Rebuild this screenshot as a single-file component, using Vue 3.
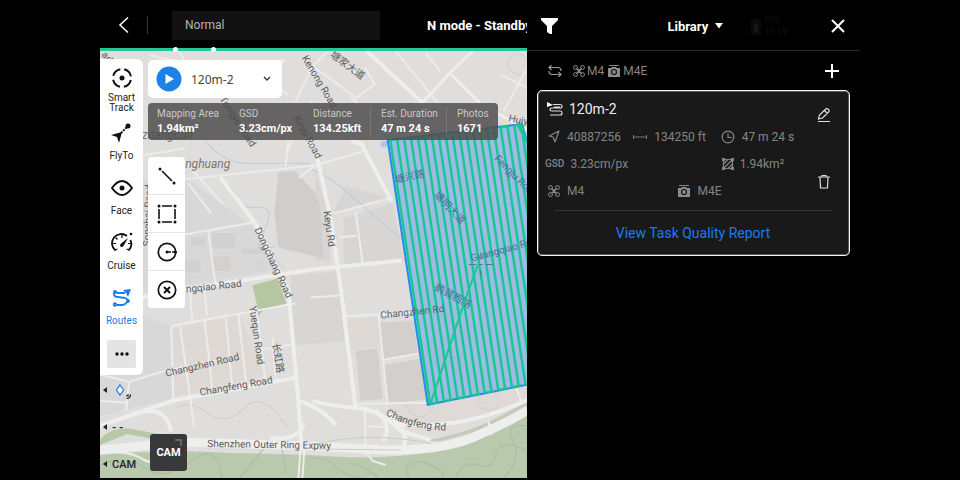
<script setup>
import { ref } from 'vue'

const mode = ref('Normal')
const route = ref('120m-2')
const source = ref('Library')

const stats = [
  { label: 'Mapping Area', value: '1.94km²' },
  { label: 'GSD', value: '3.23cm/px' },
  { label: 'Distance', value: '134.25kft' },
  { label: 'Est. Duration', value: '47 m 24 s' },
  { label: 'Photos', value: '1671' },
]

const labels = [
  { t: 'Kenong Road', x: 301, y: 58, r: 59 },
  { t: '塘家大道', x: 329, y: 56, r: 37, s: 10 },
  { t: 'Tongye Road', x: 219, y: 99, r: 57 },
  { t: 'Keyu Road', x: 293, y: 118, r: 61 },
  { t: 'Keyu Rd', x: 323, y: 211, r: 82 },
  { t: 'Huiyi', x: 507, y: 121, r: 12 },
  { t: 'Dongchang Road', x: 254, y: 229, r: 65 },
  { t: 'ngqiao Road', x: 186, y: 292, r: -6 },
  { t: 'Changzhen Road', x: 166, y: 376, r: -13 },
  { t: 'Changfeng Road', x: 200, y: 395, r: -10 },
  { t: 'Yuequn Road', x: 249, y: 306, r: 82 },
  { t: '长虹路', x: 272, y: 343, r: 81, s: 10 },
  { t: 'Shenzhen Outer Ring Expwy', x: 207, y: 446, r: 1 },
  { t: 'Songbai Road', x: 150, y: 246, r: -88 },
  { t: 'ad', x: 101, y: 55, r: 50 },
]
const zoneLabels = [
  { t: 'Guangqiao Road', x: 471, y: 261, r: -15 },
  { t: 'Fengju Road', x: 493, y: 159, r: 45 },
  { t: '塘兴路', x: 395, y: 183, r: -13, s: 10 },
  { t: '塘明大道', x: 433, y: 195, r: 47, s: 10 },
  { t: '鹅颈西路', x: 433, y: 289, r: 28, s: 10 },
]

const passes = Array.from({ length: 28 }, (_, i) => {
  const x = 390 + i * 7
  return { x1: x - 8, y1: 90, x2: x + 42, y2: 420 }
})
</script>

<template>
  <main class="screen">
    <section class="flight">
      <header class="topbar">
        <button class="plain back" aria-label="Back">
          <svg width="12" height="18" viewBox="0 0 12 18"><path d="M10 1.500 2 9l8 7.500" fill="none" stroke="#fff" stroke-width="1.500" /></svg>
        </button>
        <span class="bar-sep"></span>
        <input v-model="mode" class="mode" aria-label="Status" />
        <h1 class="state">N mode - Standby</h1>
      </header>
      <div class="battery-line"><i></i><i></i></div>

      <div class="map">
        <svg class="map-art" viewBox="100 51 427 426" preserveAspectRatio="xMinYMin slice" aria-label="Map">
          <defs>
            <clipPath id="zone"><path d="M387 140 521 124 560 261 600 369 427 404Z" /></clipPath>
            <path id="curve" d="M385 414Q412 429 450 430" />
          </defs>
          <path d="M100 51H527V477H100Z" fill="#dfdedd" />
          <path d="M143 180 186 178 250 224 285 268 143 292ZM100 300 170 325 172 398 100 415Z" fill="#d8d8d9" />
          <path d="M345 185 385 197 333 212ZM343 218 392 203 404 262 343 268ZM290 275 338 271 344 340 293 345ZM315 170 327 212 330 262 315 260Z" fill="#d7d6d5" />
          <path d="M278 172 295 171 315 193 320 210 323 258 278 247 274 212Z" fill="#d0cecd" />
          <path d="M191 237h14v8h-14ZM212 233h23v15h-23ZM185 259h15v13h-15ZM212 256h18v14h-18ZM242 248h24v5h-24Z" fill="#d3d0ce" />
          <path d="M173 328 240 313 264 375 174 396ZM345 319 378 316 383 346 348 349Z" fill="#ded9d5" />
          <path d="M355 350 377 348 382 398 360 400ZM378 322 413 320 417 353 383 359ZM384 364 420 358 425 399 386 402Z" fill="#d2cfcc" />
          <path d="M386 405 527 386V404Q474 424 400 421Z" fill="#dfdad7" />
          <path d="M252 285 277 278 286 303 258 310ZM254 310l12-4-10 12Z" fill="#b5c6a1" />
          <path d="M100 439Q110 426 132 428L174 436Q196 440 215 438L180 443 127 433 100 444Z" fill="#b7c8a8" />
          <path d="M100 454Q170 448 230 452L310 454Q380 460 430 451 484 439 527 413V477H100Z" fill="#b9c9ae" />
          <path d="M423 440Q480 431 527 399V408Q490 429 440 440Z" fill="#c2cbb7" />

          <g fill="none" stroke="#a9bb9d" stroke-width="1">
            <path d="M100 464Q125 453 145 467T190 461T220 470T254 459T285 472" />
            <path d="M455 477Q462 459 477 464T495 453T527 450M408 477Q402 462 414 461T438 469T430 477M502 477Q522 458 512 440T527 425" />
            <path d="M309 458Q328 455 335 465T363 477M378 477Q365 466 350 462" />
          </g>
          <g fill="none" stroke="#d1cecc" stroke-width="1">
            <path d="M175 408Q188 398 207 412T244 407T287 427M408 409q-8-12 4-18t17 7q8 7-2 15t-19-4ZM477 402q1-11 10-11t11 7q0 12-10 11t-11-7" />
            <path d="M506 65q4-14 15-10t4 17q-10 8-19-7ZM184 275q-8-8 3-15M255 264q3-5 7 0t-3 5Z" />
          </g>
          <g fill="none" stroke="#becbda" stroke-width="1">
            <path d="M205 140Q223 163 247 163T310 163M218 177Q234 188 237 198T258 207T263 232 275 245M310 169Q328 175 350 195L402 240" />
          </g>
          <g fill="none" stroke="#ececeb" stroke-width="2">
            <path d="M143 155 185 148M185 179 315 165 363 151M188 165 222 203M188 183 211 213M333 213 390 198M355 212 362 262M338 237 356 235M310 297 339 295M315 165 298 178M288 140 285 165M312 100 286 153" />
            <path d="M185 234 253 222M208 230 215 283M172 325 295 303M171 326 173 398M180 326 194 426M204 318 213 395M225 313 232 386M238 313 246 384M256 310 265 380M272 337 275 376M255 350 295 343" />
            <path d="M100 374 129 381 165 370 220 359M129 381 126 410M342 316 413 312M378 315 387 404M383 359 417 353M355 403 427 402M364 405 365 446M365 425 383 426M100 400 126 402M190 290 192 323M204 288 207 315" />
            <path d="M283 60 270 82 288 95M295 102 312 66 356 98 374 84 364 67M312 66 327 52M395 51 434 99 468 147M500 75 527 88M503 111 527 66M350 97 374 119M425 53 440 72M150 55Q200 70 285 60M178 50 190 70" />
            <path d="M515 386 520 400M487 419 491 434M300 447 298 477M304 447 302 477M366 452 372 460 385 464M100 451Q130 450 142 458T175 453" />
          </g>
          <g fill="none" stroke="#eeeeed" stroke-linejoin="round">
            <path d="M220 177 255 223 288 290 298 402 301 447M309 137 318 163 330 217 340 287 343 310 355 407" stroke-width="4" />
            <path d="M143 297 185 289 312 269 401 260M100 425 172 400 295 377M350 140 361 144 391 201M366 51 434 114" stroke-width="4" />
            <path d="M472 51 449 73 429 95 413 110M449 73 480 104 527 130" stroke-width="3" />
            <path d="M312 400Q330 405 355 407T400 430L430 439M375 409Q393 426 382 440M403 445Q409 430 388 413M130 415Q165 400 171 431M298 400Q322 407 335 424M270 437Q300 440 303 422M390 422Q455 432 527 399" stroke-width="4" />
            <path d="M100 449 180 441 310 445 385 449Q447 450 480 433 510 420 527 409" stroke-width="9" />
          </g>
          <path d="M311 444Q353 434 389 437T430 443M312 448 400 449" fill="none" stroke="#c8cec1" stroke-width="1" />

          <g class="road">
            <text v-for="l in labels" :key="l.t" :transform="`translate(${l.x} ${l.y}) rotate(${l.r})`" :font-size="l.s || 10">{{ l.t }}</text>
            <text font-size="10"><textPath href="#curve">Changfeng Rd</textPath></text>
            <text class="area" x="142" y="139">zitangcun</text>
            <text class="area" x="185" y="168">nghuang</text>
          </g>

          <path d="M380 141h7v6h-7Z" fill="#adc7e5" />
          <path d="M387 140 521 124 560 261 600 369 427 404Z" fill="#94b5e6" fill-opacity=".86" />
          <path d="M387 140 521 124 560 261 600 369 427 404Z" fill="none" stroke="#238de9" stroke-width="2" />
          <g clip-path="url(#zone)" stroke="#19c793" stroke-width="2.500">
            <line v-for="p in passes" :key="p.x1" v-bind="p" />
            <path d="M515 124 523 124 532 155Z" fill="#19c793" stroke="none" />
          </g>
          <g class="zone-road">
            <text v-for="l in zoneLabels" :key="l.t" :transform="`translate(${l.x} ${l.y}) rotate(${l.r})`" :font-size="l.s || 10">{{ l.t }}</text>
          </g>
          <text class="crossing" transform="translate(380 318) rotate(-6)" font-size="10">Changzhen Rd</text>
          <path d="M430 403 527 383M389 140 519 125" stroke="#19c793" stroke-width="2" stroke-dasharray="8 6" />
          <path d="M430 402 463 303 477 264" fill="none" stroke="#19c793" stroke-width="2" />
          <path d="M468 264h7M478 264h4M485 264h7M480 252v6M480 270v6" stroke="#56758a" stroke-width="1" />
        </svg>

        <div class="overlay">
          <div class="rail-col">
            <nav class="rail">
              <button class="plain tool">
                <svg width="22" height="22" viewBox="0 0 22 22"><circle cx="11" cy="11" r="9" fill="none" stroke="#111" stroke-width="2" stroke-dasharray="10.140 4" stroke-dashoffset="-2" /><circle cx="11" cy="11" r="2.500" fill="#111" /></svg>
                <span>Smart<br />Track</span>
              </button>
              <button class="plain tool">
                <svg width="22" height="22" viewBox="0 0 22 22"><path d="M1 13 12 10 9 21 7 15Z" fill="#111" /><path d="M11 11 18 4" stroke="#111" stroke-width="2" stroke-dasharray="2 1" /><circle cx="18" cy="4" r="2.500" fill="#111" /></svg>
                <span>FlyTo</span>
              </button>
              <button class="plain tool">
                <svg width="22" height="22" viewBox="0 0 22 22"><path d="M1 11Q11-3 21 11 11 25 1 11Z" fill="none" stroke="#111" stroke-width="2" /><circle cx="11" cy="11" r="2.500" fill="#111" /></svg>
                <span>Face</span>
              </button>
              <button class="plain tool">
                <svg width="22" height="22" viewBox="0 0 22 22"><path d="M4.500 18.500A9 9 0 0 1 16 4M19.300 8A9 9 0 0 1 17.500 18.500" fill="none" stroke="#111" stroke-width="1.800" /><path d="M2 11.500h3M20 11.500h-3M11 3v3M4.500 5.500l2 2M4 18l2.500-1M18 18l-2.500-1" stroke="#111" stroke-width="1.200" /><path d="M9.500 12 17 6 12.500 14Q10.500 16 9 14Z" fill="#111" /><circle cx="20" cy="2" r="1.300" fill="#111" /></svg>
                <span>Cruise</span>
              </button>
              <button class="plain tool active">
                <svg width="22" height="22" viewBox="0 0 22 22"><g fill="none" stroke="#1b80e4" stroke-width="1.800"><path d="M14 6H7Q3 4 3 7t4 3l7 1q4 1 2 4t-5 3H6" /><circle cx="4" cy="17.500" r="1.300" /><circle cx="4" cy="5" r="1" /><circle cx="17" cy="14" r="1" /></g><path d="M12 3 20 2 17 10 15 6Z" fill="#1b80e4" /></svg>
                <span>Routes</span>
              </button>
              <button class="plain more" aria-label="More">
                <svg width="16" height="6" viewBox="0 0 16 6"><g fill="#111"><circle cx="3" cy="3" r="1.700" /><circle cx="8" cy="3" r="1.700" /><circle cx="13" cy="3" r="1.700" /></g></svg>
              </button>
            </nav>
            <div class="keys">
              <div class="key">
                <svg width="28" height="18" viewBox="0 0 28 18"><path d="M0 9 4 6v6Z" fill="#222" /><path d="M17 4 20.500 9 17 14 13.500 9Z" fill="#fff" stroke="#2385e0" stroke-width="1.300" /><path d="M23 15h2v-2M23.500 17.500q4 0 4-4" fill="none" stroke="#222" stroke-width="1.200" /></svg>
              </div>
              <div class="key"><svg width="4" height="6" viewBox="0 0 4 6"><path d="M0 3 4 0v6Z" fill="#222" /></svg><b>- -</b></div>
              <div class="key"><svg width="4" height="6" viewBox="0 0 4 6"><path d="M0 3 4 0v6Z" fill="#222" /></svg><span>CAM</span></div>
            </div>
          </div>

          <div class="work">
            <label class="route">
              <svg width="26" height="26" viewBox="0 0 26 26"><circle cx="13" cy="13" r="12.500" fill="#1d82e6" /><path d="M9.500 8 18 13l-8.500 5Z" fill="#fff" /></svg>
              <select v-model="route" aria-label="Route"><option>120m-2</option></select>
              <svg width="8" height="6" viewBox="0 0 8 6"><path d="M1 1 4 4 7 1" fill="none" stroke="#333" stroke-width="1.300" /></svg>
            </label>
            <dl class="stats">
              <div v-for="s in stats" :key="s.label"><dt>{{ s.label }}</dt><dd>{{ s.value }}</dd></div>
            </dl>
            <div class="shapes">
              <button class="plain" aria-label="Line">
                <svg width="20" height="20" viewBox="0 0 20 20"><g fill="#111"><circle cx="3" cy="3" r="1.500" /><circle cx="17" cy="17" r="1.500" /></g><path d="M5 5 15 15" stroke="#111" stroke-width="1.600" /></svg>
              </button>
              <button class="plain" aria-label="Area">
                <svg width="20" height="20" viewBox="0 0 20 20"><g fill="#111"><circle cx="2" cy="2" r="1.500" /><circle cx="18" cy="2" r="1.500" /><circle cx="2" cy="18" r="1.500" /><circle cx="18" cy="18" r="1.500" /></g><path d="M5 2h10M5 18h10M2 5v10M18 5v10" stroke="#111" stroke-width="1.600" /></svg>
              </button>
              <button class="plain" aria-label="Orbit">
                <svg width="20" height="20" viewBox="0 0 20 20"><circle cx="10" cy="10" r="8.700" fill="none" stroke="#111" stroke-width="1.700" /><circle cx="10" cy="10" r="1.500" fill="#111" /><circle cx="18.500" cy="10" r="1.500" fill="#111" /><path d="M10 10h8" stroke="#111" stroke-width="1.500" stroke-dasharray="4 1" /></svg>
              </button>
              <button class="plain" aria-label="Clear">
                <svg width="20" height="20" viewBox="0 0 20 20"><circle cx="10" cy="10" r="8.700" fill="none" stroke="#111" stroke-width="1.700" /><path d="m7 7 6 6M13 7l-6 6" stroke="#111" stroke-width="2" /></svg>
              </button>
            </div>
            <button class="plain cam">CAM
              <svg width="7" height="7" viewBox="0 0 7 7"><path d="M0 1h6v6" fill="none" stroke="#777" stroke-width="1.500" /></svg>
            </button>
          </div>
        </div>
      </div>
    </section>

    <aside class="library">
      <header class="lib-head">
        <button class="plain filter" aria-label="Filter">
          <svg width="17" height="17" viewBox="0 0 17 17"><path d="M0 0h17v2L11 8v8H9L6 14V8L0 2Z" fill="#fff" /></svg>
        </button>
        <label class="source">
          <select v-model="source" aria-label="Source"><option>Library</option></select>
          <svg width="8" height="6" viewBox="0 0 8 6"><path d="M0 0h8L4 5.500Z" fill="#fff" /></svg>
        </label>
        <div class="head-end">
          <span class="power">
            <svg width="10" height="17" viewBox="0 0 10 17"><path d="M3 0h4v2h3v15H0V2h3Z" fill="#0a0a0a" /><path d="M3 6h4v9H3Z" fill="#151515" /></svg>
            <span>80%<br />16.1V</span>
          </span>
          <button class="plain" aria-label="Close">
            <svg width="14" height="14" viewBox="0 0 14 14"><path d="m1 1 12 12M13 1 1 13" stroke="#fff" stroke-width="2" /></svg>
          </button>
        </div>
      </header>

      <div class="devices">
        <svg width="14" height="12" viewBox="0 0 14 12"><path d="M3.500 0 1 2.500 3.500 5M1 2.500H10Q13 2.500 13 6M10.500 7 13 9.500 10.500 12M13 9.500H4Q1 9.500 1 6" fill="none" stroke="#999" stroke-width="1.200" /></svg>
        <svg class="first" width="12" height="12" viewBox="0 0 12 12"><use href="#drone" /></svg>
        <span>M4</span>
        <svg class="next" width="12" height="12" viewBox="0 0 12 12"><use href="#camera" /></svg>
        <span>M4E</span>
        <button class="plain add" aria-label="Add">
          <svg width="14" height="14" viewBox="0 0 14 14"><path d="M7 0v14M0 7h14" stroke="#fff" stroke-width="2" /></svg>
        </button>
      </div>

      <svg class="symbols" width="0" height="0" aria-hidden="true">
        <symbol id="drone" viewBox="0 0 12 12"><g fill="none" stroke="#858585" stroke-width="1"><circle cx="2.500" cy="2.500" r="2" /><circle cx="9.500" cy="2.500" r="2" /><circle cx="2.500" cy="9.500" r="2" /><circle cx="9.500" cy="9.500" r="2" /><path d="m2.500 2.500 7 7M9.500 2.500l-7 7" /></g><path d="M4.500 4h3v4h-3Z" fill="#858585" /></symbol>
        <symbol id="camera" viewBox="0 0 12 12"><path d="M1 0h10v1H1ZM0 3h3l1-1h4l1 1h3v9H0Z" fill="#8a8a8a" /><circle cx="6" cy="7" r="2.500" fill="none" stroke="#111" stroke-width="1.200" /></symbol>
      </svg>

      <article class="card">
        <div class="card-body">
          <div class="facts">
            <h2>
              <svg width="18" height="14" viewBox="-2 0 18 14"><path d="M0 0 6 3 0 5Z" fill="#fff" /><path d="M6 2.500h7Q15 2.500 15 4.500T13 6H5Q3 6 3 7.500T5 9h8.500Q15 9 15 11t-2 2H3M7 5h6" fill="none" stroke="#ddd" stroke-width="1.200" /></svg>
              120m-2
            </h2>
            <div class="row three">
              <span><svg width="16" height="13" viewBox="0 0 16 13"><path d="M14 1 4 6l4 1 2 5Z" fill="none" stroke="#858585" stroke-width="1.200" stroke-linejoin="round" /></svg>40887256</span>
              <span><svg width="16" height="6" viewBox="0 0 16 6"><path d="M1.500 1v4M14.500 1v4M1.500 3h13" stroke="#777" stroke-width="1" /></svg>134250 ft</span>
              <span><svg width="16" height="14" viewBox="0 0 16 14"><g fill="none" stroke="#858585" stroke-width="1.200"><circle cx="8" cy="7" r="5.800" /><path d="M8 3.500V7.500h4" /></g></svg>47 m 24 s</span>
            </div>
            <div class="row two">
              <span><b>GSD</b>3.23cm/px</span>
              <span><svg width="12" height="12" viewBox="0 0 12 12"><path d="M1.500 1.500h9v9h-9ZM1.500 6 6 1.500M1.500 10.500 10.500 1.500M6 10.500 10.500 6" fill="none" stroke="#858585" stroke-width="1.200" /><path d="M0 0h3v3H0ZM9 0h3v3H9ZM0 9h3v3H0ZM9 9h3v3H9Z" fill="#858585" /></svg>1.94km²</span>
            </div>
            <div class="row pair">
              <span><svg width="16" height="12" viewBox="0 0 16 12"><use href="#drone" x="3" width="12" height="12" /></svg>M4</span>
              <span><svg width="16" height="12" viewBox="0 0 16 12"><use href="#camera" x="3" width="12" height="12" /></svg>M4E</span>
            </div>
          </div>
          <div class="actions">
            <button class="plain" aria-label="Edit">
              <svg width="14" height="14" viewBox="0 0 14 14"><path d="M1.500 11 2.500 7 8.500 1.300Q10 0 11.500 1.500T11.500 4L5.500 10ZM7.500 2.500 10.500 5.500" fill="none" stroke="#ddd" stroke-width="1.200" /><path d="M1 13.500h12" stroke="#ddd" stroke-width="1" /></svg>
            </button>
            <button class="plain" aria-label="Delete">
              <svg width="12" height="14" viewBox="0 0 12 14"><path d="M0 2h12M4 1.500V.500h4v1M2 2 2.500 13h7L10 2" fill="none" stroke="#ddd" stroke-width="1.200" /></svg>
            </button>
          </div>
        </div>
        <a class="report" href="#report">View Task Quality Report</a>
      </article>
    </aside>
  </main>
</template>

<style>
body {
  margin: 0;
  background: #000;
}
</style>

<style scoped>
.screen {
  box-sizing: border-box;
  display: grid;
  grid-template-columns: 427fr 333fr;
  min-height: 100vh;
  padding: 0 100px 3px;
  background: #000;
  color: #fff;
  font-family: Roboto, "Noto Sans CJK SC", sans-serif;
}
.plain {
  display: flex;
  align-items: center;
  justify-content: center;
  padding: 0;
  border: 0;
  background: none;
  color: inherit;
  font: inherit;
}
svg {
  display: block;
  flex: none;
}
.flight {
  display: flex;
  flex-direction: column;
  min-width: 0;
  overflow: hidden;
}
.topbar {
  display: flex;
  align-items: center;
  height: 48px;
  padding-top: 2px;
  box-sizing: border-box;
}
.topbar > * {
  flex-shrink: 0;
}
.back {
  width: 47px;
}
.bar-sep {
  width: 1px;
  height: 18px;
  margin-right: 24px;
  background: #333;
}
.mode {
  box-sizing: border-box;
  width: 208px;
  height: 29px;
  padding: 0 13px;
  border: 0;
  border-radius: 2px;
  background: #121213;
  color: #b4b4b4;
  font: 12px Roboto, sans-serif;
}
.state {
  margin: 0 0 0 47px;
  font-size: 13px;
  font-weight: 700;
  white-space: nowrap;
}
.battery-line {
  display: flex;
  align-items: center;
  gap: 33px;
  height: 3px;
  padding-left: 73px;
  background: #22c996;
}
.battery-line i {
  width: 5px;
  height: 5px;
  border-radius: 50%;
  background: #fff;
  z-index: 1;
}
.map {
  position: relative;
  display: flex;
  flex: 1;
}
.map-art {
  position: absolute;
  inset: 0;
  width: 100%;
  height: 100%;
}
.road {
  fill: #5c5c5c;
}
.zone-road {
  fill: #486c9a;
}
.crossing {
  fill: #56646f;
}
.area {
  font-size: 12px;
  font-style: italic;
  fill: #777;
}
.overlay {
  position: relative;
  display: flex;
  flex: 1;
  gap: 5px;
  padding-top: 8px;
}
.rail-col {
  width: 43px;
}
.rail {
  display: flex;
  flex-direction: column;
  align-items: center;
  padding: 8px 0 7px;
  border-radius: 0 6px 6px 0;
  background: #fff;
  color: #222;
}
.tool {
  flex-direction: column;
  justify-content: flex-start;
  gap: 6px;
  height: 55px;
  font-size: 10px;
  line-height: 12px;
}
.tool:first-child {
  line-height: 10px;
  gap: 4px;
}
.active {
  color: #1b80e4;
}
.more {
  width: 29px;
  height: 28px;
  margin-top: -2px;
  border-radius: 2px;
  background: #e4e4e4;
}
.keys {
  display: grid;
  gap: 9px;
  padding-top: 1px;
  color: #222;
  font-size: 11px;
  font-weight: 500;
}
.key {
  display: flex;
  align-items: center;
  gap: 5px;
  height: 28px;
  padding-left: 3px;
}
.work {
  display: flex;
  flex: 1;
  flex-direction: column;
  align-items: flex-start;
  padding: 1px 29px 7px 0;
}
.route {
  box-sizing: border-box;
  display: flex;
  align-items: center;
  width: 134px;
  height: 38px;
  padding: 0 11px 0 8px;
  border-radius: 5px;
  background: #fff;
}
.route select {
  appearance: none;
  flex: 1;
  min-width: 0;
  padding: 0 0 0 9px;
  border: 0;
  background: none;
  color: #444;
  font: 12px "Noto Sans", sans-serif;
}
.stats {
  box-sizing: border-box;
  display: grid;
  grid-template-columns: 82fr 74fr 68fr 76fr 41fr;
  align-self: stretch;
  margin: 5px 0 17px;
  padding: 4px 0 2px 9px;
  border-radius: 4px;
  background: rgba(78, 75, 75, 0.84);
}
.stats div {
  white-space: nowrap;
}
.stats div:nth-child(n + 3):not(:last-child) {
  margin-right: 10px;
  border-right: 1px solid rgba(255, 255, 255, 0.12);
}
.stats dt {
  color: #c9c9c9;
  font-size: 10px;
  line-height: 13px;
}
.stats dd {
  margin: 0;
  font-size: 11px;
  font-weight: 700;
  line-height: 18px;
}
.shapes {
  display: grid;
  width: 37px;
  gap: 1px;
  overflow: hidden;
  border-radius: 4px;
  background: #e6e6e6;
}
.shapes button {
  height: 37px;
  background: #fff;
}
.cam {
  position: relative;
  width: 37px;
  height: 37px;
  margin: auto 0 0 2px;
  border-radius: 3px;
  background: #39393b;
  color: #fff;
  font-size: 11px;
  font-weight: 700;
}
.cam svg {
  position: absolute;
  top: 5px;
  right: 5px;
}
.library {
  min-width: 0;
}
.lib-head {
  box-sizing: border-box;
  display: grid;
  grid-template-columns: 1fr auto 1fr;
  align-items: center;
  height: 51px;
  padding: 2px 15px 0 14px;
  border-bottom: 1px solid #2c2c2c;
}
.filter {
  width: 17px;
}
.source {
  display: flex;
  align-items: center;
  gap: 6px;
  padding-left: 4px;
}
.source select {
  appearance: none;
  padding: 0;
  border: 0;
  background: none;
  color: #fff;
  font: 700 13px Roboto, sans-serif;
}
.head-end {
  display: flex;
  align-items: center;
  justify-content: space-between;
  padding-left: 28px;
}
.power {
  display: flex;
  align-items: center;
  gap: 4px;
  color: #111;
  font-size: 9px;
  line-height: 11px;
}
.devices {
  display: flex;
  align-items: center;
  height: 39px;
  padding: 0 21px;
  color: #858585;
  font-size: 12px;
}
.first {
  margin: 0 2px 0 11px;
}
.next {
  margin: 0 3px 0 4px;
}
.add {
  margin-left: auto;
}
.symbols {
  position: absolute;
}
.card {
  margin: 0 10px;
  padding: 10px 17px 14px 7px;
  border: 1px solid #f5f5f5;
  border-radius: 5px;
  box-shadow: inset 0 0 0 1px #5a5a5a;
  background: #191919;
}
.card-body {
  display: flex;
  padding-bottom: 6px;
}
.facts {
  flex: 1;
  color: #858585;
  font-size: 12px;
}
.card h2 {
  display: flex;
  align-items: center;
  gap: 6px;
  height: 15px;
  margin: 0 0 7px;
  color: #eee;
  font-size: 14px;
  font-weight: 400;
}
.row {
  display: grid;
  height: 27px;
  align-items: center;
}
.row span {
  display: flex;
  align-items: center;
  gap: 6px;
  white-space: nowrap;
}
.row b {
  font-size: 10px;
  font-weight: 500;
}
.three {
  grid-template-columns: 87fr 87fr 96fr;
}
.two {
  grid-template-columns: 176fr 94fr;
}
.pair {
  grid-template-columns: 130fr 140fr;
}
.actions {
  display: flex;
  flex-direction: column;
  align-items: center;
  justify-content: space-between;
  width: 16px;
  padding: 7px 0 15px;
}
.report {
  display: block;
  margin-left: 9px;
  padding-top: 14px;
  border-top: 1px solid #343434;
  color: #1a7cf2;
  font-size: 14px;
  line-height: 16px;
  text-align: center;
  text-decoration: none;
}
</style>
